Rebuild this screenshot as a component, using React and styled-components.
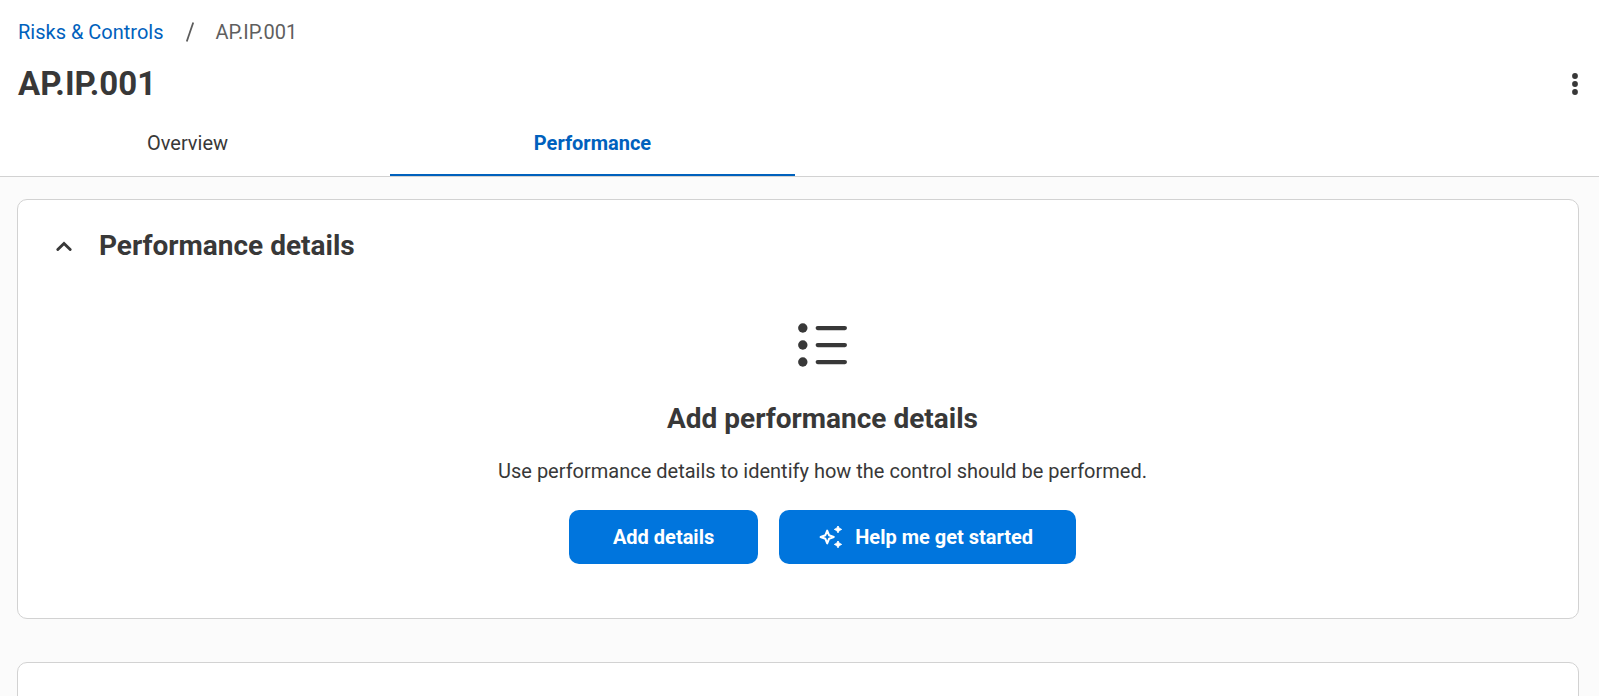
import React, { useState } from "react";
import styled, { createGlobalStyle } from "styled-components";

const tabs = ["Overview", "Performance"];

const App = () => {
  const [activeTab, setActiveTab] = useState("Performance");
  const [open, setOpen] = useState(true);

  return (
    <>
      <GlobalStyle />
      <Page>
        <Header>
          <Breadcrumb aria-label="Breadcrumb">
            <CrumbLink href="#">Risks &amp; Controls</CrumbLink>
            <Slash viewBox="0 0 8 20" aria-hidden="true">
              <path d="M0.8 19.4 7.2 0.6" />
            </Slash>
            <Crumb>AP.IP.001</Crumb>
          </Breadcrumb>
          <TitleRow>
            <PageTitle>AP.IP.001</PageTitle>
            <IconButton aria-label="More actions">
              <svg width="6" height="22" viewBox="0 0 6 22" fill="currentColor">
                <circle cx="3" cy="3" r="2.9" />
                <circle cx="3" cy="11" r="2.9" />
                <circle cx="3" cy="19" r="2.9" />
              </svg>
            </IconButton>
          </TitleRow>
          <TabList role="tablist">
            {tabs.map((tab) => (
              <Tab
                key={tab}
                role="tab"
                aria-selected={tab === activeTab}
                $active={tab === activeTab}
                onClick={() => setActiveTab(tab)}
              >
                {tab}
              </Tab>
            ))}
          </TabList>
        </Header>
        <Content>
          <Card>
            <CardHeader>
              <IconButton
                aria-label="Toggle section"
                aria-expanded={open}
                onClick={() => setOpen(!open)}
              >
                <Chevron $open={open} viewBox="0 0 16 10">
                  <path d="M1.8 8.6 8 2.4l6.2 6.2" />
                </Chevron>
              </IconButton>
              <Heading>Performance details</Heading>
            </CardHeader>
            {open && (
              <EmptyState>
                <ListIcon />
                <Heading as="h3">Add performance details</Heading>
                <Description>
                  Use performance details to identify how the control should be
                  performed.
                </Description>
                <Actions>
                  <Button>Add details</Button>
                  <Button $withIcon>
                    <SparkleIcon />
                    Help me get started
                  </Button>
                </Actions>
              </EmptyState>
            )}
          </Card>
          <Card />
        </Content>
      </Page>
    </>
  );
};

const ListIcon = () => (
  <svg width="50" height="44" viewBox="0 0 50 44" fill="#383838" aria-hidden="true">
    <circle cx="4.8" cy="5" r="4.7" />
    <circle cx="4.8" cy="22" r="4.7" />
    <circle cx="4.8" cy="39" r="4.7" />
    <rect x="17.6" y="2.9" width="31.4" height="4.3" rx="2.1" />
    <rect x="17.6" y="19.9" width="31.4" height="4.3" rx="2.1" />
    <rect x="17.6" y="36.9" width="31.4" height="4.3" rx="2.1" />
  </svg>
);

const SparkleIcon = () => (
  <svg
    width="24"
    height="24"
    viewBox="0 0 24 24"
    fill="#ffffff"
    stroke="#ffffff"
    strokeLinejoin="round"
    aria-hidden="true"
  >
    <path
      fill="none"
      strokeWidth="2"
      d="M8.2 5.6 10 10.2 14.8 12 10 13.8 8.2 18.4 6.4 13.8 1.6 12 6.4 10.2Z"
    />
    <path
      strokeWidth="1"
      d="M19 1 20.2 3.2 22.6 4.4 20.2 5.6 19 7.8 17.8 5.6 15.4 4.4 17.8 3.2Z"
    />
    <path
      strokeWidth="1"
      d="M19 16 20.2 18.2 22.6 19.4 20.2 20.6 19 22.8 17.8 20.6 15.4 19.4 17.8 18.2Z"
    />
  </svg>
);

const GlobalStyle = createGlobalStyle`
  * {
    box-sizing: border-box;
  }

  body {
    margin: 0;
    color: #383838;
    background: #fbfbfb;
    font-family: Roboto, "Liberation Sans", sans-serif;
    font-size: 20px;
    line-height: 24px;
  }

  button {
    font: inherit;
    color: inherit;
    border: none;
    cursor: pointer;
  }
`;

const Page = styled.div`
  display: flex;
  flex-direction: column;
  height: 100vh;
  overflow: hidden;
`;

const Header = styled.header`
  flex: none;
  padding-top: 20px;
  background: #ffffff;
  border-bottom: 1px solid #d2d2d2;
`;

const Breadcrumb = styled.nav`
  display: flex;
  align-items: center;
  gap: 22px;
  padding: 0 18px;
`;

const CrumbLink = styled.a`
  color: #0061bd;
  text-decoration: none;
`;

const Slash = styled.svg`
  width: 8px;
  height: 20px;
  fill: none;
  stroke: #5c5c5c;
  stroke-width: 1.7;
`;

const Crumb = styled.span`
  color: #5f5f5f;
`;

const TitleRow = styled.div`
  display: flex;
  align-items: center;
  justify-content: space-between;
  padding: 20px 17px 0 18px;
`;

const PageTitle = styled.h1`
  margin: 0;
  font-size: 33px;
  line-height: 40px;
`;

const IconButton = styled.button`
  display: flex;
  align-items: center;
  justify-content: center;
  padding: 4px;
  background: none;
  border-radius: 4px;
`;

const TabList = styled.div`
  display: flex;
  margin-left: -15px;
`;

const Tab = styled.button`
  flex: 0 1 405px;
  height: 72px;
  padding: 8px 0 0;
  background: none;
  color: ${({ $active }) => ($active ? "#0061bd" : "#383838")};
  font-weight: ${({ $active }) => ($active ? 700 : 400)};
  border-bottom: 2px solid ${({ $active }) => ($active ? "#0061bd" : "transparent")};
`;

const Content = styled.main`
  display: flex;
  flex: 1;
  flex-direction: column;
  gap: 43px;
  min-height: 0;
  padding: 22px 20px 0 17px;
  overflow: hidden;
`;

const Card = styled.section`
  flex: none;
  min-height: 96px;
  background: #ffffff;
  border: 1px solid #d2d2d2;
  border-radius: 10px;
`;

const CardHeader = styled.div`
  display: flex;
  align-items: center;
  gap: 23px;
  padding: 30px 34px 0;
`;

const Chevron = styled.svg`
  width: 16px;
  height: 10px;
  fill: none;
  stroke: #383838;
  stroke-width: 2.8;
  stroke-linecap: round;
  transform: ${({ $open }) => ($open ? "none" : "rotate(180deg)")};
`;

const Heading = styled.h2`
  margin: 0;
  font-size: 28px;
  line-height: 32px;
`;

const EmptyState = styled.div`
  display: flex;
  flex-direction: column;
  align-items: center;
  padding: 61px 33px 54px 82px;

  h3 {
    margin-top: 36px;
  }
`;

const Description = styled.p`
  margin: 24px 0 27px;
  text-align: center;
`;

const Actions = styled.div`
  display: flex;
  flex-wrap: wrap;
  justify-content: center;
  gap: 21px;
`;

const Button = styled.button`
  display: flex;
  align-items: center;
  justify-content: center;
  gap: 12px;
  height: 54px;
  padding: ${({ $withIcon }) => ($withIcon ? "0 43px 0 40px" : "0 44px")};
  color: #ffffff;
  font-weight: 700;
  background: #0075dd;
  border-radius: 10px;
`;

export default App;
